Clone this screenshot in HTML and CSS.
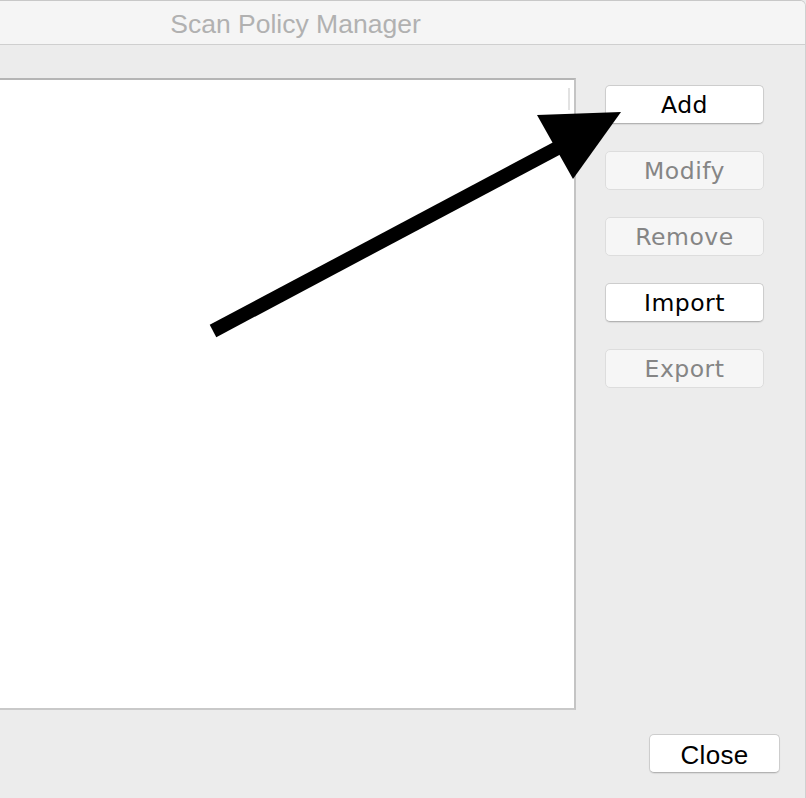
FILE: index.html
```html
<!DOCTYPE html>
<html>
<head>
<meta charset="utf-8">
<title>Scan Policy Manager</title>
<link rel="stylesheet" href="styles.css">
</head>
<body>
<div class="window">
  <div class="titlebar">
    <span class="title">Scan Policy Manager</span>
  </div>
  <div class="content">
    <div class="main">
      <div class="list">
        <div class="scroll-line"></div>
      </div>
      <div class="actions">
        <button class="btn">Add</button>
        <button class="btn disabled">Modify</button>
        <button class="btn disabled">Remove</button>
        <button class="btn">Import</button>
        <button class="btn disabled">Export</button>
      </div>
    </div>
    <div class="footer">
      <button class="btn close">Close</button>
    </div>
  </div>
  <svg class="arrow" width="806" height="798" viewBox="0 0 806 798">
    <line x1="213" y1="331" x2="565" y2="144" stroke="#000" stroke-width="14"/>
    <polygon points="537,115 621,112 573,179" fill="#000"/>
  </svg>
</div>
</body>
</html>
```

FILE: styles.css
```css
* { box-sizing: border-box; }
html, body {
  margin: 0;
  padding: 0;
  width: 806px;
  height: 798px;
  overflow: hidden;
  background: #ececec;
}
.window {
  position: relative;
  width: 806px;
  height: 798px;
  background: #ececec;
  border-top: 1px solid #c8c8c8;
  border-right: 1px solid #d0d0d0;
  border-top-right-radius: 6px;
  overflow: hidden;
}
.titlebar {
  height: 44px;
  background: #f5f5f5;
  border-bottom: 1px solid #cfcfcf;
  display: flex;
  align-items: center;
  justify-content: center;
  padding-right: 214px;
}
.title {
  font-family: "Liberation Sans", Arial, sans-serif;
  font-size: 26.5px;
  color: #b1b1b1;
  position: relative;
  top: 2px;
}
.content {
  padding-top: 33px;
  display: flex;
  flex-direction: column;
}
.main {
  display: flex;
  align-items: flex-start;
}
.list {
  position: relative;
  width: 576px;
  height: 632px;
  background: #ffffff;
  border-top: 2px solid #b5b5b5;
  border-right: 2px solid #c4c4c4;
  border-bottom: 2px solid #c9c9c9;
}
.scroll-line {
  position: absolute;
  top: 8px;
  right: 4px;
  width: 2px;
  height: 22px;
  background: #e2e2e2;
}
.actions {
  margin-left: 29px;
  padding-top: 7px;
  display: flex;
  flex-direction: column;
  gap: 27px;
}
.btn {
  width: 159px;
  height: 39px;
  background: #ffffff;
  border: 1px solid #cdcdcd;
  border-bottom-color: #b3b3b3;
  border-radius: 5px;
  box-shadow: 0 1px 1px rgba(0,0,0,0.08);
  font-family: "DejaVu Sans", sans-serif;
  font-size: 23.5px;
  letter-spacing: 0.5px;
  color: #000000;
  padding: 2px 0 0 0;
  line-height: 1;
}
.btn.disabled {
  background: #f6f6f6;
  border-color: #dddddd;
  box-shadow: none;
  color: #858585;
}
.footer {
  display: flex;
  justify-content: flex-end;
  padding-top: 24px;
  padding-right: 25px;
}
.btn.close {
  width: 131px;
  height: 39px;
  font-family: "Liberation Sans", Arial, sans-serif;
  font-size: 26px;
  letter-spacing: 0.3px;
}
.arrow {
  position: absolute;
  left: 0;
  top: -1px;
  pointer-events: none;
}
```
